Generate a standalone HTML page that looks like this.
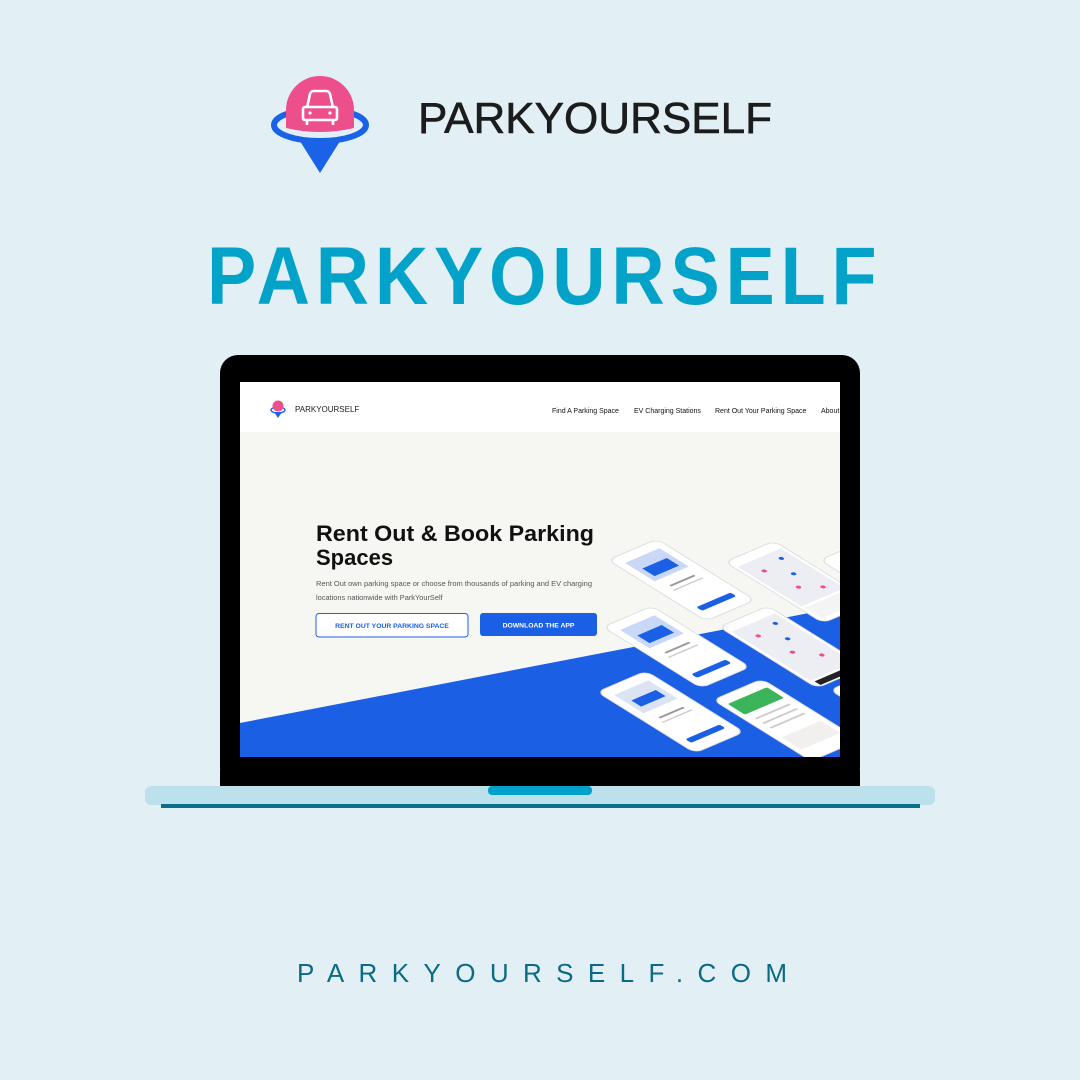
<!DOCTYPE html>
<html><head><meta charset="utf-8"><style>
html,body{margin:0;padding:0;background:#e2f0f5;}
svg{display:block}
text{font-family:"Liberation Sans",sans-serif}
</style></head><body>
<svg width="1080" height="1080" viewBox="0 0 1080 1080" xmlns="http://www.w3.org/2000/svg">
<rect width="1080" height="1080" fill="#e2f0f5"/>
<!-- top logo -->
<ellipse cx="320" cy="125" rx="46" ry="16" fill="none" stroke="#1b63e6" stroke-width="6"/>
<path d="M298 138 L342 138 L320 173 Z" fill="#1b63e6"/>
<path d="M286 110 A34 34 0 1 1 354 110 L354 128 Q320 136 286 128 Z" fill="#ec4f8c"/>
<g fill="none" stroke="#fff" stroke-width="2.6" stroke-linejoin="round">
<path d="M307 108 L310 94 Q311 91 314 91 L326 91 Q329 91 330 94 L333 108"/>
<rect x="303" y="107" width="34" height="13" rx="2"/>
<path d="M307 120 v5 M333 120 v5"/>
</g>
<circle cx="310" cy="113" r="1.6" fill="#fff"/><circle cx="330" cy="113" r="1.6" fill="#fff"/>
<text x="418" y="133" font-size="44" fill="#1c1c1c" stroke="#1c1c1c" stroke-width="0.6" textLength="354" lengthAdjust="spacingAndGlyphs">PARKYOURSELF</text>
<!-- big title -->
<text transform="translate(207,304) scale(0.9,1)" x="0" y="0" font-size="82" font-weight="bold" fill="#03a2c9" textLength="744" lengthAdjust="spacing">PARKYOURSELF</text>
<!-- laptop -->
<rect x="145" y="786" width="790" height="19" rx="6" fill="#bde1ec"/>
<rect x="161" y="804" width="759" height="4" fill="#0b6f8a"/>
<rect x="220" y="355" width="640" height="431" rx="18" fill="#000"/>
<rect x="220" y="770" width="640" height="16" fill="#000"/>
<rect x="488" y="786" width="104" height="9" rx="4" fill="#02a1c9"/>
<defs><clipPath id="scr"><rect x="240" y="382" width="600" height="375"/></clipPath></defs>
<g clip-path="url(#scr)">
<rect x="240" y="382" width="600" height="375" fill="#f6f7f3"/>
<rect x="240" y="382" width="600" height="50" fill="#fff"/>
<polygon points="240,723 840,607 840,757 240,757" fill="#1b5fe5"/>
<!-- nav logo -->
<ellipse cx="278" cy="410" rx="7" ry="3" fill="none" stroke="#1b63e6" stroke-width="1.4"/>
<path d="M274 412 L282 412 L278 418 Z" fill="#1b63e6"/>
<circle cx="278" cy="406" r="5.5" fill="#ec4f8c"/>
<text x="295" y="412" font-size="8" fill="#222">PARKYOURSELF</text>
<g font-size="7" fill="#111">
<text x="552" y="413">Find A Parking Space</text>
<text x="634" y="413">EV Charging Stations</text>
<text x="715" y="413">Rent Out Your Parking Space</text>
<text x="821" y="413">About</text>
</g>
<text x="316" y="541" font-size="22" font-weight="bold" fill="#111" textLength="278" lengthAdjust="spacingAndGlyphs">Rent Out &amp; Book Parking</text>
<text x="316" y="565" font-size="22" font-weight="bold" fill="#111">Spaces</text>
<text x="316" y="586" font-size="7.4" fill="#555" textLength="276" lengthAdjust="spacingAndGlyphs">Rent Out own parking space or choose from thousands of parking and EV charging</text>
<text x="316" y="600" font-size="7.4" fill="#555">locations nationwide with ParkYourSelf</text>
<rect x="316" y="613.5" width="152" height="23.5" rx="3" fill="#fff" stroke="#1b5fe5" stroke-width="1"/>
<text x="392" y="628" font-size="6.8" font-weight="bold" fill="#1b5fe5" text-anchor="middle">RENT OUT YOUR PARKING SPACE</text>
<rect x="480" y="613" width="117" height="23" rx="3" fill="#1b5fe5"/>
<text x="538.5" y="627.5" font-size="6.8" font-weight="bold" fill="#fff" text-anchor="middle">DOWNLOAD THE APP</text>
<!-- phones -->
<g>
<g transform="matrix(0.49,-0.21,0.49,0.305,608,560)">
<rect width="100" height="200" rx="14" fill="#fff" stroke="#ddd" stroke-width="2"/>
<rect x="15" y="20" width="70" height="60" fill="#c9d8f7"/><rect x="25" y="45" width="50" height="25" fill="#1b5fe5"/>
<rect x="25" y="100" width="50" height="4" fill="#999"/><rect x="20" y="112" width="60" height="3" fill="#ccc"/>
<rect x="15" y="165" width="70" height="12" rx="4" fill="#1b5fe5"/></g>
<g transform="matrix(0.49,-0.21,0.49,0.305,603,627)">
<rect width="100" height="200" rx="14" fill="#fff" stroke="#ddd" stroke-width="2"/>
<rect x="15" y="20" width="70" height="60" fill="#c9d8f7"/><rect x="25" y="45" width="50" height="25" fill="#1b5fe5"/>
<rect x="25" y="100" width="50" height="4" fill="#999"/><rect x="20" y="112" width="60" height="3" fill="#ccc"/>
<rect x="15" y="165" width="70" height="12" rx="4" fill="#1b5fe5"/></g>
<g transform="matrix(0.49,-0.21,0.49,0.305,597,692)">
<rect width="100" height="200" rx="14" fill="#fff" stroke="#ddd" stroke-width="2"/>
<rect x="15" y="20" width="70" height="60" fill="#dce4f4"/><rect x="25" y="45" width="50" height="20" fill="#1b5fe5"/>
<rect x="25" y="100" width="50" height="4" fill="#999"/><rect x="20" y="112" width="60" height="3" fill="#ccc"/>
<rect x="15" y="165" width="70" height="12" rx="4" fill="#1b5fe5"/></g>
<g transform="matrix(0.49,-0.21,0.49,0.305,725,562)">
<rect width="100" height="200" rx="14" fill="#fff" stroke="#ddd" stroke-width="2"/>
<rect x="6" y="20" width="88" height="130" fill="#eceef3"/>
<circle cx="30" cy="50" r="4" fill="#ec4f8c"/><circle cx="60" cy="80" r="4" fill="#1b5fe5"/><circle cx="40" cy="110" r="4" fill="#ec4f8c"/><circle cx="75" cy="40" r="4" fill="#1b5fe5"/><circle cx="70" cy="130" r="4" fill="#ec4f8c"/>
<rect x="8" y="155" width="84" height="35" fill="#f4f4f4"/></g>
<g transform="matrix(0.49,-0.21,0.49,0.305,719,627)">
<rect width="100" height="200" rx="14" fill="#fff" stroke="#ddd" stroke-width="2"/>
<rect x="6" y="20" width="88" height="160" fill="#eceef3"/>
<circle cx="30" cy="50" r="4" fill="#ec4f8c"/><circle cx="60" cy="80" r="4" fill="#1b5fe5"/><circle cx="40" cy="110" r="4" fill="#ec4f8c"/><circle cx="75" cy="40" r="4" fill="#1b5fe5"/><circle cx="70" cy="140" r="4" fill="#ec4f8c"/>
<rect x="10" y="185" width="80" height="12" fill="#222"/></g>
<g transform="matrix(0.49,-0.21,0.49,0.305,713,700)">
<rect width="100" height="200" rx="14" fill="#fff" stroke="#ddd" stroke-width="2"/>
<rect x="10" y="20" width="80" height="35" rx="3" fill="#3cb55a"/>
<rect x="15" y="70" width="70" height="4" fill="#ccc"/><rect x="15" y="85" width="70" height="4" fill="#ccc"/><rect x="15" y="100" width="70" height="4" fill="#ccc"/>
<rect x="10" y="130" width="80" height="40" fill="#f1f0ee"/></g>
<g transform="matrix(0.49,-0.21,0.49,0.305,820,560)"><rect width="100" height="200" rx="14" fill="#fff" stroke="#ddd" stroke-width="2"/></g>
<g transform="matrix(0.49,-0.21,0.49,0.305,830,690)"><rect width="100" height="200" rx="14" fill="#fff" stroke="#ddd" stroke-width="2"/></g>
</g>
</g>
<!-- url -->
<text x="297" y="982" font-size="26" fill="#0b6a86" textLength="490" lengthAdjust="spacing">PARKYOURSELF.COM</text>
</svg>
</body></html>
